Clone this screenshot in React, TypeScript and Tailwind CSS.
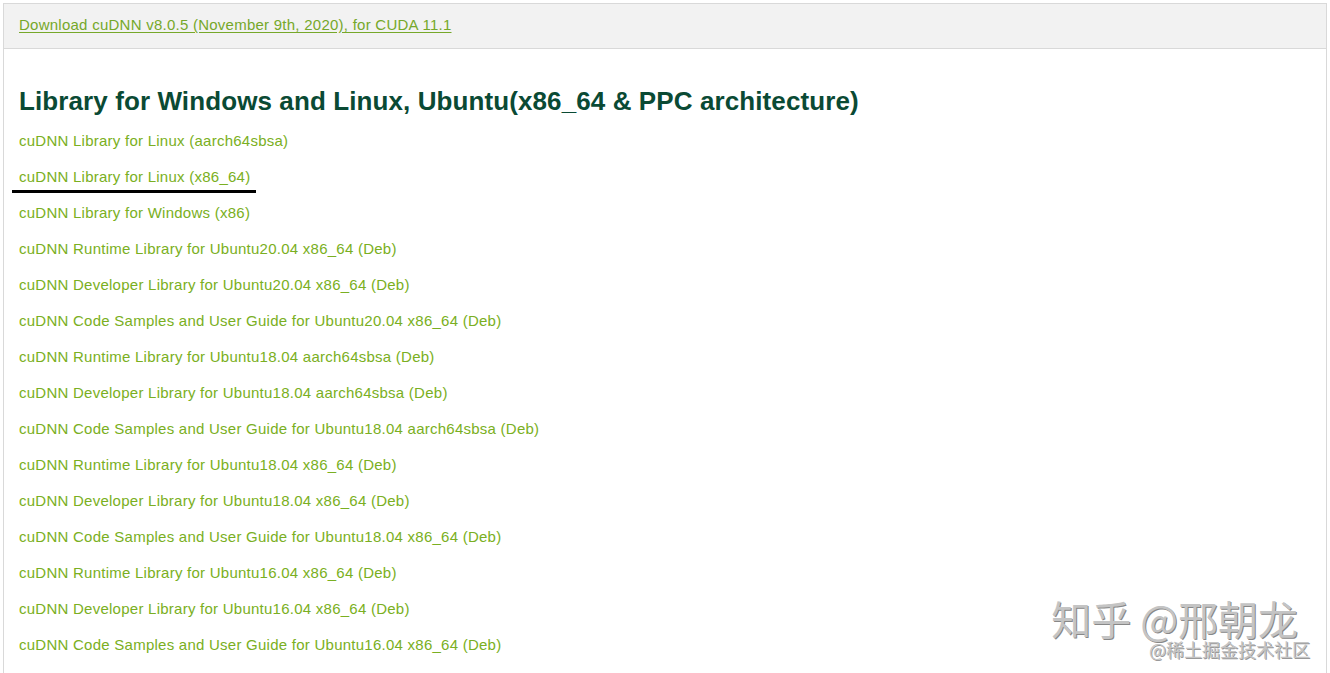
const links = [
  'cuDNN Library for Linux (aarch64sbsa)',
  'cuDNN Library for Linux (x86_64)',
  'cuDNN Library for Windows (x86)',
  'cuDNN Runtime Library for Ubuntu20.04 x86_64 (Deb)',
  'cuDNN Developer Library for Ubuntu20.04 x86_64 (Deb)',
  'cuDNN Code Samples and User Guide for Ubuntu20.04 x86_64 (Deb)',
  'cuDNN Runtime Library for Ubuntu18.04 aarch64sbsa (Deb)',
  'cuDNN Developer Library for Ubuntu18.04 aarch64sbsa (Deb)',
  'cuDNN Code Samples and User Guide for Ubuntu18.04 aarch64sbsa (Deb)',
  'cuDNN Runtime Library for Ubuntu18.04 x86_64 (Deb)',
  'cuDNN Developer Library for Ubuntu18.04 x86_64 (Deb)',
  'cuDNN Code Samples and User Guide for Ubuntu18.04 x86_64 (Deb)',
  'cuDNN Runtime Library for Ubuntu16.04 x86_64 (Deb)',
  'cuDNN Developer Library for Ubuntu16.04 x86_64 (Deb)',
  'cuDNN Code Samples and User Guide for Ubuntu16.04 x86_64 (Deb)',
];

export default function App() {
  return (
    <div className="w-[1330px] h-[673px] overflow-hidden bg-white pt-[3px] px-[3px] font-['Liberation_Sans',sans-serif]">
      <div className="relative h-full border-x border-t border-[#d9d9d9]">
        {/* header band */}
        <div className="h-[45px] bg-[#f2f2f2] border-b border-[#d9d9d9] pl-[15px] pt-[9px]">
          <a className="text-[15px] tracking-[0.25px] text-[#76a82a] underline underline-offset-2 leading-[18px]">
            Download cuDNN v8.0.5 (November 9th, 2020), for CUDA 11.1
          </a>
        </div>

        <div className="pl-[15px] pt-[36px]">
          <h2 className="text-[26px] font-bold text-[#0a4a34] leading-[32px] tracking-[0.1px]">
            Library for Windows and Linux, Ubuntu(x86_64 &amp; PPC architecture)
          </h2>
          <ul className="mt-[15px] flex flex-col">
            {links.map((l, i) => (
              <li key={i} className="h-[36px] leading-[18px] text-[15px] tracking-[0.25px] text-[#7aaf22]">
                <span className="relative inline-block">
                  {l}
                  {i === 1 && (
                    <span className="absolute left-[-7px] right-[-6px] top-[22px] h-[3px] bg-black" />
                  )}
                </span>
              </li>
            ))}
          </ul>
        </div>

        {/* watermark */}
        <div className="absolute right-[28px] bottom-[14px] flex flex-col items-end font-['Noto_Sans_CJK_SC',sans-serif] text-[#c4c4c4] select-none">
          <span className="text-[40px] leading-[42px] [text-shadow:1px_1px_0_#888]">知乎 @邢朝龙</span>
          <span className="text-[18px] leading-[20px] -mr-[12px] [text-shadow:1px_1px_0_#999]">@稀土掘金技术社区</span>
        </div>
      </div>
    </div>
  );
}
